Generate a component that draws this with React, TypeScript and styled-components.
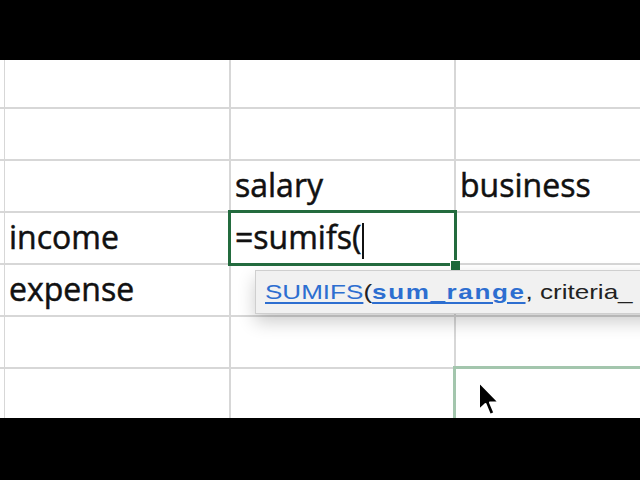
import React from "react";
import styled, { createGlobalStyle } from "styled-components";

const GlobalStyle = createGlobalStyle`
  html, body { margin: 0; padding: 0; background: #000; }
  #root { width: 640px; height: 480px; overflow: hidden; }
`;

const Frame = styled.div`
  width: 640px;
  height: 480px;
  display: flex;
  flex-direction: column;
  background: #000;
  overflow: hidden;
`;

const Letterbox = styled.div<{ $h: number }>`
  flex: 0 0 ${(p) => p.$h}px;
  background: #000;
`;

const Sheet = styled.div`
  position: relative;
  flex: 0 0 358px;
  display: grid;
  grid-template-columns: 3px 224px 223px 1fr;
  grid-template-rows: 47px repeat(6, 50px);
  gap: 2px;
  background: #d7d7d7;
  overflow: hidden;
`;

const Cell = styled.div<{ $outline?: string; $w?: number }>`
  position: relative;
  background: #fff;
  display: flex;
  align-items: flex-end;
  padding: 0 0 10px 4px;
  font-family: "Open Sans", "Noto Sans", sans-serif;
  font-size: 32px;
  line-height: 1;
  color: #111;
  -webkit-text-stroke: 0.5px #111;
  white-space: nowrap;
  ${(p) =>
    p.$outline
      ? `outline: ${p.$w ?? 3}px solid ${p.$outline}; z-index: 2;`
      : ""}
`;

const Caret = styled.span`
  display: inline-block;
  width: 2px;
  height: 36px;
  margin-left: 1px;
  margin-bottom: -6px;
  background: #111;
  vertical-align: bottom;
`;

const FillHandle = styled.div`
  position: absolute;
  right: -6px;
  bottom: -7px;
  width: 9px;
  height: 9px;
  background: #1e6a3b;
  border-left: 1px solid #fff;
  border-top: 1px solid #fff;
`;

const Popup = styled.div`
  position: absolute;
  left: 255px;
  top: 210px;
  width: 420px;
  height: 42px;
  background: #f1f1f1;
  border: 1px solid #cfcfcf;
  box-shadow: 0 8px 18px rgba(0, 0, 0, 0.2);
  display: flex;
  align-items: center;
  padding-left: 9px;
  z-index: 5;
`;

const Hint = styled.div`
  display: flex;
  align-items: baseline;
  font-family: "Liberation Sans", Arial, sans-serif;
  font-size: 21px;
  color: #222;
  white-space: nowrap;
  transform: scaleX(1.24);
  transform-origin: left center;
`;

const FnName = styled.span`
  color: #2d6ed0;
  text-decoration: underline;
  text-underline-offset: 3px;
`;

const Arg = styled.span<{ $active?: boolean }>`
  color: ${(p) => (p.$active ? "#2d6ed0" : "#222")};
  font-weight: ${(p) => (p.$active ? 700 : 400)};
  text-decoration: ${(p) => (p.$active ? "underline" : "none")};
  text-underline-offset: 3px;
  letter-spacing: ${(p) => (p.$active ? 1.3 : 0)}px;
`;

const Cursor = styled.svg`
  position: absolute;
  left: 477px;
  top: 320px;
  z-index: 6;
`;

const rows: string[][] = [
  ["", "", "", ""],
  ["", "", "", ""],
  ["", "", "salary", "business"],
  ["", "income", "SEL", ""],
  ["", "expense", "", ""],
  ["", "", "", ""],
  ["", "", "", "HL"],
];

export default function App() {
  return (
    <>
      <GlobalStyle />
      <Frame>
        <Letterbox $h={60} />
        <Sheet>
          {rows.flatMap((r, ri) =>
            r.map((v, ci) => {
              const key = `${ri}-${ci}`;
              if (v === "SEL")
                return (
                  <Cell key={key} $outline="#236b3e" $w={3}>
                    =sumifs(
                    <Caret />
                    <FillHandle />
                  </Cell>
                );
              if (v === "HL")
                return <Cell key={key} $outline="#a3c6ad" $w={3} />;
              return <Cell key={key}>{v}</Cell>;
            })
          )}
          <Popup>
            <Hint>
              <FnName>SUMIFS</FnName>
              <Arg>(</Arg>
              <Arg $active>sum_range</Arg>
              <Arg>, criteria_</Arg>
            </Hint>
          </Popup>
          <Cursor width="26" height="38" viewBox="0 0 26 38">
            <path
              d="M2 2 L2 30 L8.5 24 L13 35 L17.5 33 L13 22.5 L22 22.5 Z"
              fill="#000"
              stroke="#fff"
              strokeWidth="2"
              strokeLinejoin="round"
            />
          </Cursor>
        </Sheet>
        <Letterbox $h={62} />
      </Frame>
    </>
  );
}
